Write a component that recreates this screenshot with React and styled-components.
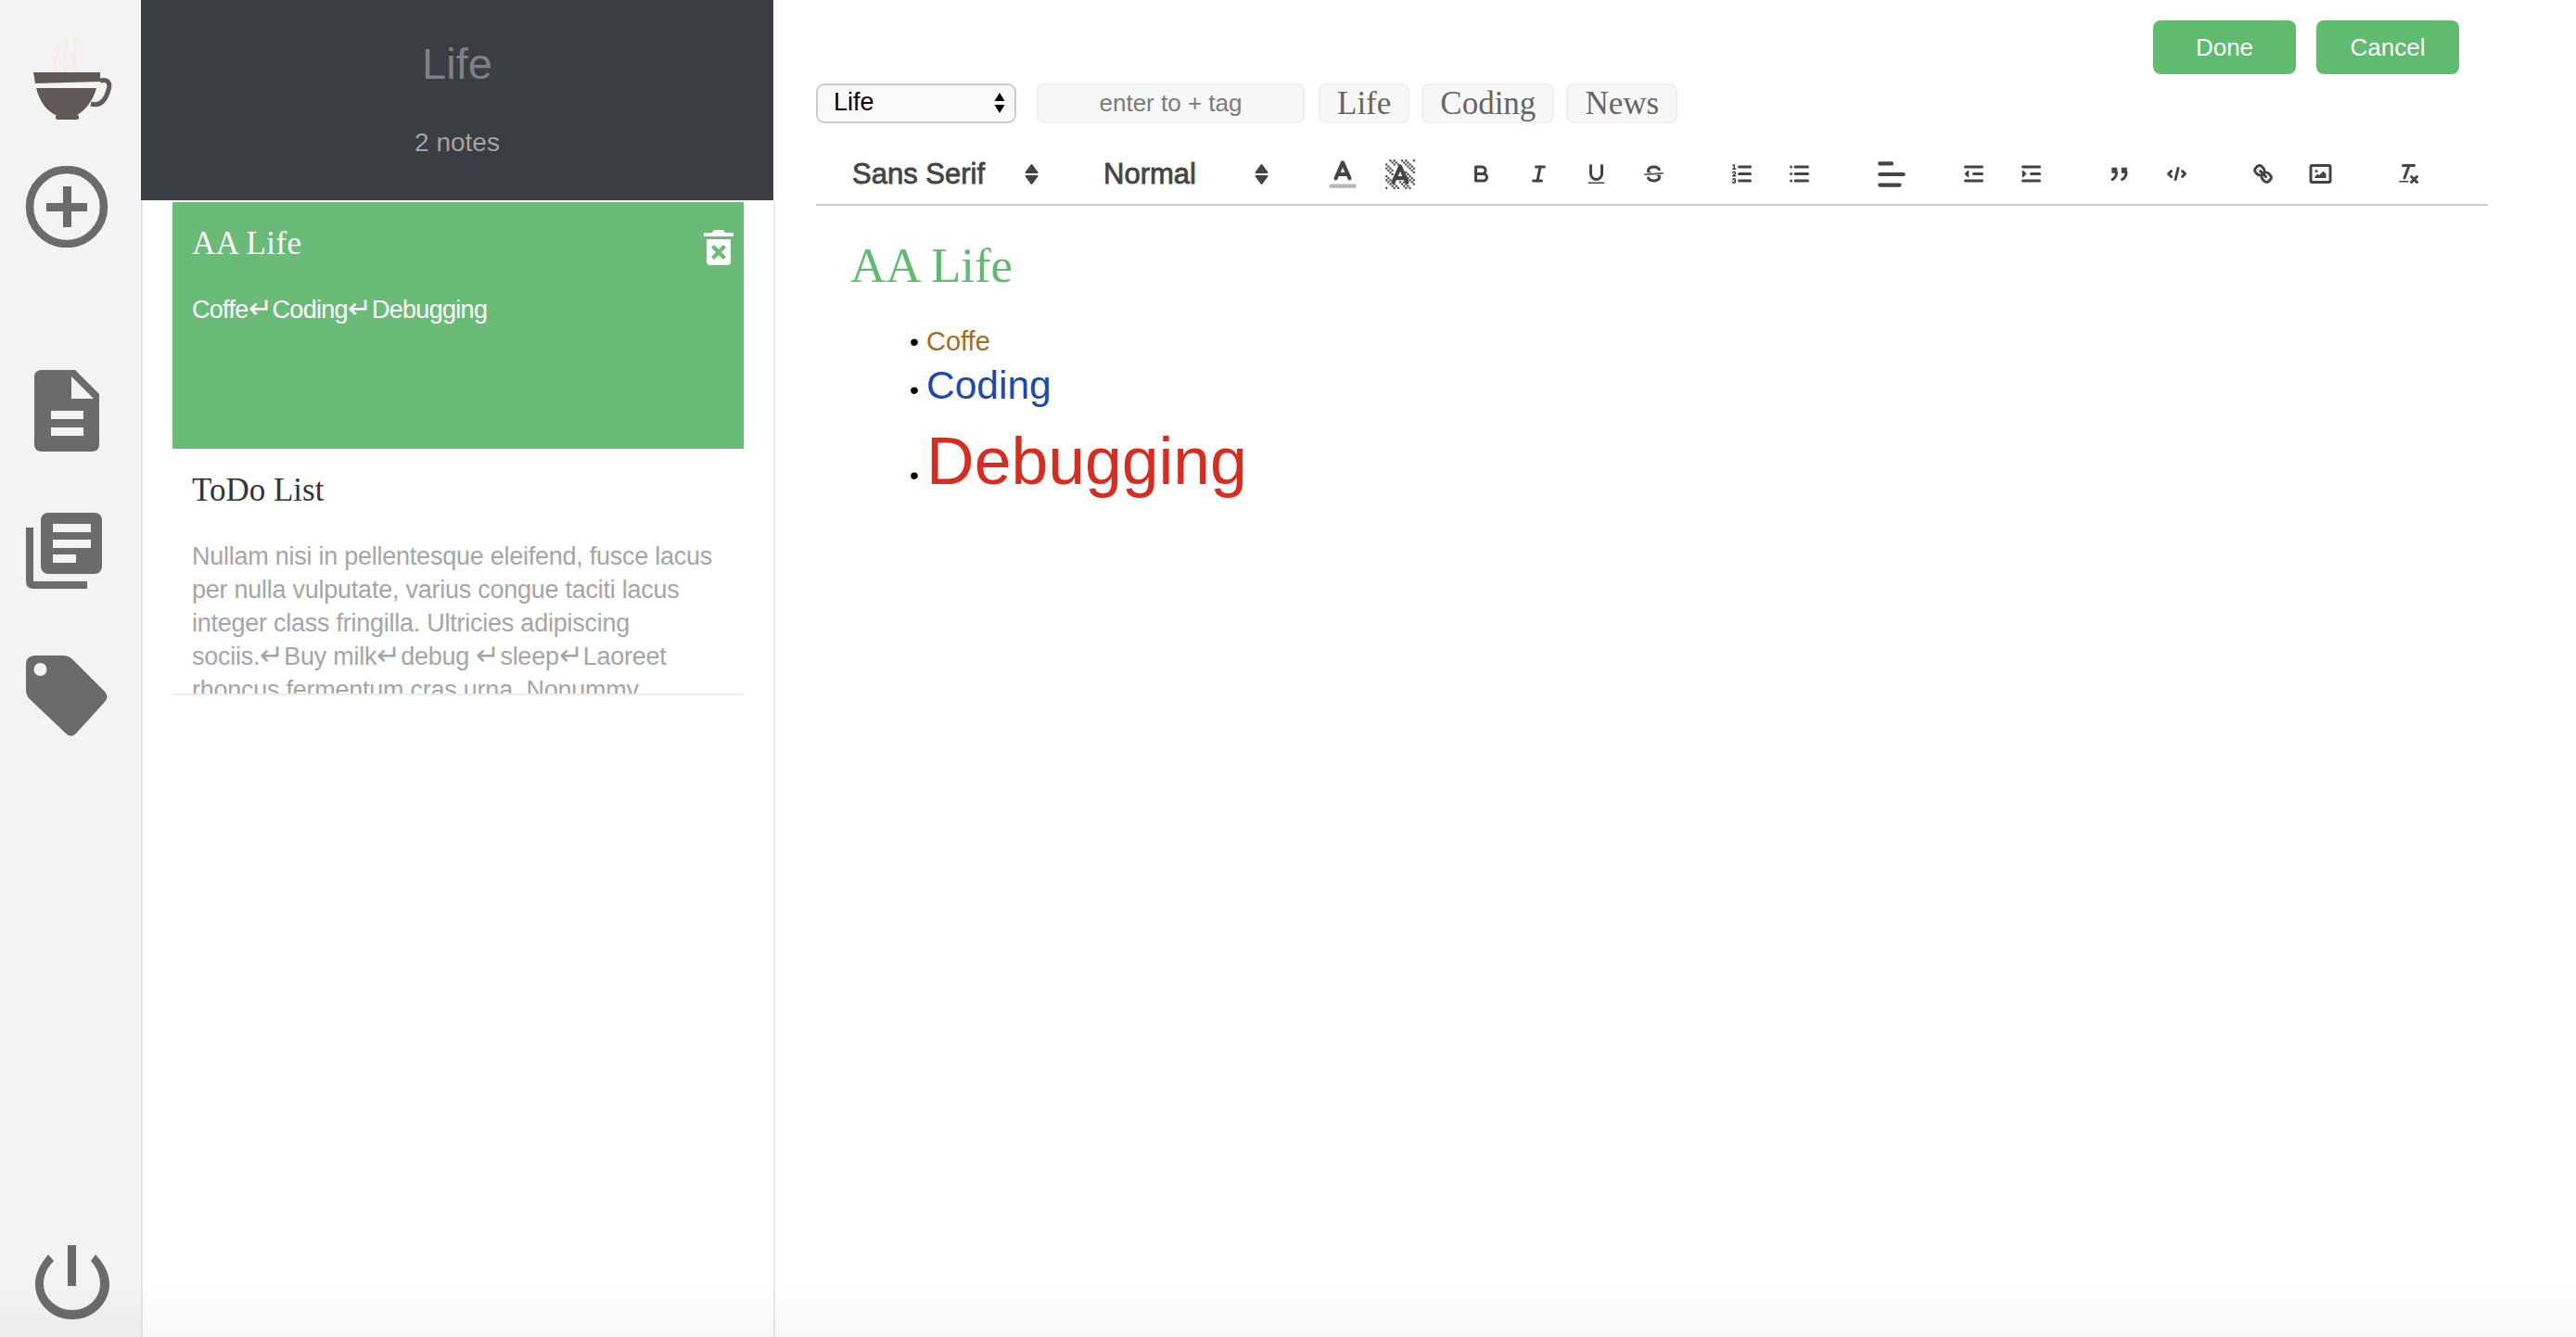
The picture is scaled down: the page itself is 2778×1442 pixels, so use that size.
import React from 'react';
import styled, { createGlobalStyle } from 'styled-components';

const GlobalStyle = createGlobalStyle`
  html, body { margin: 0; height: 100%; background: #fff; overflow: hidden; }
  #root { height: 100%; }
  * { box-sizing: border-box; }
`;

const SANS = `"Liberation Sans", Arial, sans-serif`;
const SERIF = `"Liberation Serif", "Times New Roman", serif`;

const Page = styled.div`
  position: relative;
  display: flex;
  height: 100vh;
  font-family: ${SANS};
`;
const BottomFade = styled.div`
  position: absolute;
  left: 0;
  right: 0;
  bottom: 0;
  height: 60px;
  pointer-events: none;
  background: linear-gradient(rgba(0, 0, 0, 0), rgba(0, 0, 0, 0.03));
`;

/* left icon rail */
const Sidebar = styled.nav`
  flex: 0 0 152px;
  display: flex;
  flex-direction: column;
  background: #f3f3f3;
`;
const NavIcon = styled.svg`
  display: block;
  width: 152px;
  height: ${p => p.$h}px;
  margin-top: ${p => p.$top}px;
  fill: #6b6b6b;
`;
const PowerIcon = styled(NavIcon)`
  margin-top: auto;
  margin-bottom: 19px;
`;

/* notes column */
const NotesPanel = styled.section`
  flex: 0 0 684px;
  display: flex;
  flex-direction: column;
`;
const NotebookHeader = styled.header`
  height: 216px;
  margin-right: 2px;
  background: #3a3d42;
  text-align: center;
`;
const NotebookTitle = styled.h1`
  margin: 0;
  padding-top: 42px;
  font-size: 47px;
  line-height: 54px;
  font-weight: 400;
  color: #808183;
`;
const NotebookCount = styled.div`
  margin-top: 42px;
  font-size: 28px;
  line-height: 32px;
  color: #a3a3a3;
`;
const NoteList = styled.div`
  flex: 1;
  padding: 2px 32px 0 32px;
  border-left: 2px solid #e4e4e4;
  border-right: 2px solid #e9e9e9;
`;
const NoteCard = styled.article`
  position: relative;
  height: 266px;
  padding: 25px 21px 0;
  overflow: hidden;
  background: ${p => (p.$active ? '#6abb77' : '#fff')};
  border-bottom: ${p => (p.$active ? '0' : '2px solid #ececec')};
`;
const NoteTitle = styled.h2`
  margin: 0;
  font-family: ${SERIF};
  font-size: 35px;
  line-height: 40px;
  font-weight: 400;
  letter-spacing: ${p => (p.$active ? '0.4px' : '0')};
  color: ${p => (p.$active ? '#fff' : '#333')};
`;
const NoteBody = styled.p`
  margin: 33px 0 0;
  font-size: 27px;
  line-height: 36px;
  letter-spacing: ${p => (p.$active ? '-0.7px' : '-0.25px')};
  color: ${p => (p.$active ? '#fff' : '#a5a5a5')};
`;
const ReturnMark = styled.span`
  font-size: 31px;
  line-height: 31px;
  letter-spacing: 0;
`;
const TrashIcon = styled.svg`
  position: absolute;
  top: 30px;
  right: 11px;
  width: 32px;
  height: 38px;
`;

/* editor */
const Editor = styled.main`
  flex: 1;
  min-width: 0;
  padding: 22px 95px 0 44px;
`;
const ActionRow = styled.div`
  display: flex;
  justify-content: flex-end;
  gap: 22px;
  padding-right: 31px;
`;
const ActionButton = styled.button`
  width: 154px;
  height: 58px;
  padding: 0;
  border: 0;
  border-radius: 8px;
  background: #5fbb6e;
  color: #fff;
  font-family: ${SANS};
  font-size: 26px;
`;
const MetaRow = styled.div`
  display: flex;
  align-items: stretch;
  height: 43px;
  margin-top: 10px;
`;
const SelectWrap = styled.div`
  position: relative;
  width: 216px;
  margin-right: 22px;
`;
const NotebookSelect = styled.select`
  appearance: none;
  width: 100%;
  height: 100%;
  padding: 0 0 3px 17px;
  border: 2px solid #cbcbcb;
  border-radius: 9px;
  background: #f8f8f8;
  color: #000;
  font-family: ${SANS};
  font-size: 27px;
`;
const SelectArrows = styled.svg`
  position: absolute;
  right: 12px;
  top: 9px;
  width: 12px;
  height: 24px;
  pointer-events: none;
`;
const TagInput = styled.input`
  width: 289px;
  margin-right: 15px;
  border: 2px solid #efefef;
  border-radius: 8px;
  background: #f7f7f7;
  text-align: center;
  font-family: ${SANS};
  font-size: 26px;
  outline: none;
  &::placeholder { color: #7b7b7b; opacity: 1; }
`;
const Tag = styled.span`
  display: flex;
  align-items: center;
  margin-right: 13px;
  padding: 0 18px;
  border: 2px solid #efefef;
  border-radius: 8px;
  background: #f7f7f7;
  font-family: ${SERIF};
  font-size: 35px;
  color: #666;
`;
const Toolbar = styled.div`
  display: flex;
  align-items: center;
  height: 69px;
  margin-top: 20px;
  padding-top: 2px;
  border-bottom: 2px solid #ccc;
`;
const Picker = styled.div`
  flex: 0 0 ${p => p.$width}px;
  display: flex;
  justify-content: space-between;
  align-items: center;
  padding: 0 31px 0 39px;
  font-size: 31px;
  color: #444;
  -webkit-text-stroke: 0.8px #444;
`;
const PickerArrows = styled.svg`
  width: 15px;
  height: 24px;
  fill: #444;
  stroke: #444;
  stroke-width: 2;
  stroke-linejoin: round;
`;
const ToolGroup = styled.div`
  display: flex;
  margin-left: ${p => p.$gap}px;
`;
const ToolButton = styled.button`
  flex: 0 0 62px;
  width: 62px;
  height: 44px;
  padding: 0;
  border: 0;
  background: none;
  display: flex;
  align-items: center;
  justify-content: center;
`;
const ToolSvg = styled.svg.attrs({ viewBox: '0 0 18 18' })`
  width: ${p => p.$size || 27}px;
  height: ${p => p.$size || 27}px;
  fill: none;
  stroke: #444;
  stroke-width: 2;
  stroke-linecap: round;
  stroke-linejoin: round;
  .fill { fill: #444; stroke: none; }
  .thin { stroke-width: 1; }
  .label { stroke: #b5b5b5; }
`;
const Content = styled.div`
  padding: 34px 0 0 37px;
`;
const ContentTitle = styled.h2`
  margin: 0;
  font-family: ${SERIF};
  font-size: 53px;
  line-height: 60px;
  font-weight: 400;
  color: #5fbb6e;
`;
const BulletList = styled.ul`
  list-style: none;
  margin: 33px 0 0;
  padding: 0 0 0 63px;
`;
const Bullet = styled.li`
  display: flex;
  align-items: baseline;
  font-size: ${p => p.$size}px;
  line-height: ${p => p.$line}px;
  color: ${p => p.$color};
  &::before {
    content: '•';
    flex: 0 0 18px;
    margin-left: 1px;
    font-size: 28px;
    line-height: 1;
    color: #000;
  }
`;

const checkerCells = [];
for (let y = 2; y < 17; y++) {
  for (let x = 2; x < 17; x++) {
    const nearLetter = x > 5 && x < 12 && y > 4 && y < 13;
    if ((x + y) % 2 === 0 && (x - y + 18) % 3 !== 0 && !nearLetter) checkerCells.push([x, y]);
  }
}

const Icons = {
  color: () => (
    <ToolSvg $size={38}>
      <line className="label" x1="3" x2="15" y1="15" y2="15" />
      <polyline points="5.5 11 9 3 12.5 11" />
      <line x1="11.63" x2="6.38" y1="9" y2="9" />
    </ToolSvg>
  ),
  background: () => (
    <ToolSvg $size={38}>
      {checkerCells.map(([x, y]) => (
        <rect key={`${x}-${y}`} className="fill" x={x - 0.5} y={y - 0.5} width="1" height="1" />
      ))}
      <polyline points="5.5 13 9 5 12.5 13" />
      <line x1="11.63" x2="6.38" y1="11" y2="11" />
    </ToolSvg>
  ),
  bold: () => (
    <ToolSvg>
      <path d="M5,4H9.5A2.5,2.5,0,0,1,12,6.5v0A2.5,2.5,0,0,1,9.5,9H5A0,0,0,0,1,5,9V4A0,0,0,0,1,5,4Z" />
      <path d="M5,9h5.5A2.5,2.5,0,0,1,13,11.5v0A2.5,2.5,0,0,1,10.5,14H5a0,0,0,0,1,0,0V9A0,0,0,0,1,5,9Z" />
    </ToolSvg>
  ),
  italic: () => (
    <ToolSvg>
      <line x1="7" x2="13" y1="4" y2="4" />
      <line x1="5" x2="11" y1="14" y2="14" />
      <line x1="8" x2="10" y1="14" y2="4" />
    </ToolSvg>
  ),
  underline: () => (
    <ToolSvg>
      <path d="M5,3V9a4.012,4.012,0,0,0,4,4H9a4.012,4.012,0,0,0,4-4V3" />
      <rect className="fill" height="1" rx="0.5" ry="0.5" width="12" x="3" y="15" />
    </ToolSvg>
  ),
  strike: () => (
    <ToolSvg>
      <line className="thin" x1="15.5" x2="2.5" y1="8.5" y2="9.5" />
      <path className="fill" d="M9.007,8C6.542,7.791,6,7.519,6,6.5,6,5.792,7.283,5,9,5c1.571,0,2.765.679,2.969,1.309a1,1,0,0,0,1.9-.617C13.356,4.106,11.354,3,9,3,6.2,3,4,4.538,4,6.5a3.2,3.2,0,0,0,.5,1.843Z" />
      <path className="fill" d="M8.984,10C11.457,10.208,12,10.479,12,11.5c0,0.708-1.283,1.5-3,1.5-1.571,0-2.765-.679-2.969-1.309a1,1,0,1,0-1.9.617C4.644,13.894,6.646,15,9,15c2.8,0,5-1.538,5-3.5a3.2,3.2,0,0,0-.5-1.843Z" />
    </ToolSvg>
  ),
  ordered: () => (
    <ToolSvg>
      <line x1="7" x2="15" y1="4" y2="4" />
      <line x1="7" x2="15" y1="9" y2="9" />
      <line x1="7" x2="15" y1="14" y2="14" />
      <line className="thin" x1="2.5" x2="4.5" y1="5.5" y2="5.5" />
      <path className="fill" d="M3.5,6A0.5,0.5,0,0,1,3,5.5V3.085l-0.276.138A0.5,0.5,0,0,1,2.053,3c-0.124-.247-0.023-0.324.224-0.447l1-.5A0.5,0.5,0,0,1,4,2.5v3A0.5,0.5,0,0,1,3.5,6Z" />
      <path className="thin" d="M4.5,10.5h-2c0-.234,1.85-1.076,1.85-2.234A0.959,0.959,0,0,0,2.5,8.156" />
      <path className="thin" d="M2.5,14.846a0.959,0.959,0,0,0,1.85-.109A0.7,0.7,0,0,0,3.75,14a0.688,0.688,0,0,0,.6-0.736,0.959,0.959,0,0,0-1.85-.109" />
    </ToolSvg>
  ),
  bullet: () => (
    <ToolSvg>
      <line x1="6" x2="15" y1="4" y2="4" />
      <line x1="6" x2="15" y1="9" y2="9" />
      <line x1="6" x2="15" y1="14" y2="14" />
      <line x1="3" x2="3" y1="4" y2="4" />
      <line x1="3" x2="3" y1="9" y2="9" />
      <line x1="3" x2="3" y1="14" y2="14" />
    </ToolSvg>
  ),
  align: () => (
    <ToolSvg $size={38}>
      <line x1="3" x2="9" y1="3.5" y2="3.5" />
      <line x1="3" x2="15" y1="9" y2="9" />
      <line x1="3" x2="13" y1="14.5" y2="14.5" />
    </ToolSvg>
  ),
  outdent: () => (
    <ToolSvg>
      <line x1="3" x2="15" y1="14" y2="14" />
      <line x1="3" x2="15" y1="4" y2="4" />
      <line x1="9" x2="15" y1="9" y2="9" />
      <polyline className="thin" points="5 7 5 11 3 9 5 7" fill="#444" />
    </ToolSvg>
  ),
  indent: () => (
    <ToolSvg>
      <line x1="3" x2="15" y1="14" y2="14" />
      <line x1="3" x2="15" y1="4" y2="4" />
      <line x1="9" x2="15" y1="9" y2="9" />
      <polyline className="thin" points="3 7 3 11 5 9 3 7" fill="#444" />
    </ToolSvg>
  ),
  quote: () => (
    <ToolSvg>
      <rect className="fill" height="4" width="4" x="3.5" y="4.5" />
      <rect className="fill" height="4" width="4" x="10.5" y="4.5" />
      <path d="M7,8c0,4.031-3,5-3,5" />
      <path d="M14,8c0,4.031-3,5-3,5" />
    </ToolSvg>
  ),
  code: () => (
    <ToolSvg>
      <polyline points="5 7 3 9 5 11" />
      <polyline points="13 7 15 9 13 11" />
      <line x1="10" x2="8" y1="5" y2="13" />
    </ToolSvg>
  ),
  link: () => (
    <ToolSvg>
      <line x1="7" x2="11" y1="7" y2="11" />
      <path d="M8.9,4.577a3.476,3.476,0,0,1,.36,4.679A3.476,3.476,0,0,1,4.577,8.9C3.185,7.5,2.035,6.4,4.217,4.217S7.5,3.185,8.9,4.577Z" />
      <path d="M13.423,9.1a3.476,3.476,0,0,0-4.679-.36,3.476,3.476,0,0,0,.36,4.679c1.392,1.392,2.5,2.542,4.679.36S14.815,10.5,13.423,9.1Z" />
    </ToolSvg>
  ),
  image: () => (
    <ToolSvg>
      <rect height="12" width="14" x="2" y="3" rx="1" />
      <circle className="fill" cx="6" cy="7" r="1" />
      <polyline className="fill" points="5 12 5 11 7 9 8 10 11 7 13 9 13 12 5 12" />
    </ToolSvg>
  ),
  clean: () => (
    <ToolSvg>
      <line x1="5" x2="13" y1="3" y2="3" />
      <line x1="6" x2="9.35" y1="12" y2="3" />
      <line x1="11" x2="15" y1="11" y2="15" />
      <line x1="15" x2="11" y1="11" y2="15" />
      <rect className="fill" height="1" rx="0.5" ry="0.5" width="7" x="2" y="14" />
    </ToolSvg>
  ),
};

const toolGroups = [
  { gap: 18, tools: ['color', 'background'] },
  { gap: 25, tools: ['bold', 'italic', 'underline', 'strike'] },
  { gap: 33, tools: ['ordered', 'bullet'] },
  { gap: 38, tools: ['align'] },
  { gap: 26, tools: ['outdent', 'indent'] },
  { gap: 33, tools: ['quote', 'code'] },
  { gap: 31, tools: ['link', 'image'] },
  { gap: 33, tools: ['clean'] },
];

const UpDown = () => (
  <PickerArrows viewBox="0 0 15 24">
    <path d="M7.5 2 L13.5 10 H1.5 Z" />
    <path d="M7.5 22 L13.5 14 H1.5 Z" />
  </PickerArrows>
);

const App = () => {
  return (
    <Page>
      <GlobalStyle />
      <Sidebar>
        <NavIcon viewBox="0 40 152 90" $h={90} $top={40}>
          <g fill="none" stroke="#f5eee2" strokeWidth="3.5" strokeLinecap="round">
            <path d="M60 76 C56 66 64 60 62 51" />
            <path d="M70 76 C66 62 74 56 71 43" />
            <path d="M82 76 C76 62 84 56 81 43" />
          </g>
          <path fill="#5f5a57" d="M36 78 H108 V88 L38 90 Z" />
          <path fill="#5f5a57" d="M39 95 H104 C100 110 90 121 81 125 H62 C50 120 43 110 39 95 Z" />
          <rect fill="#5f5a57" x="60" y="124" width="25" height="5" rx="2" />
          <path fill="none" stroke="#5f5a57" strokeWidth="5" d="M108 87 C118 85 119 91 117 97 C114 108 108 115 98 112" />
        </NavIcon>
        <NavIcon viewBox="0 179 152 88" $h={88} $top={49}>
          <circle cx="72" cy="223" r="40" fill="none" stroke="#6b6b6b" strokeWidth="8.5" />
          <rect x="50" y="219" width="44" height="9" />
          <rect x="68" y="201" width="9" height="44" />
        </NavIcon>
        <NavIcon viewBox="0 399 152 88" $h={88} $top={132}>
          <path d="M45 399 H81 L107 425 V479 Q107 487 99 487 H45 Q37 487 37 479 V407 Q37 399 45 399 Z" />
          <path fill="#f3f3f3" d="M77 406 V430 H101 Z" />
          <rect fill="#f3f3f3" x="55" y="443" width="35" height="9" />
          <rect fill="#f3f3f3" x="55" y="461" width="35" height="9" />
        </NavIcon>
        <NavIcon viewBox="0 553 152 82" $h={82} $top={66}>
          <rect x="44" y="553" width="66" height="66" rx="8" />
          <rect fill="#f3f3f3" x="57" y="565" width="41" height="9" />
          <rect fill="#f3f3f3" x="57" y="582" width="41" height="9" />
          <rect fill="#f3f3f3" x="57" y="598" width="25" height="9" />
          <path d="M28 569 H36 V627 H94 V635 H36 Q28 635 28 627 Z" />
        </NavIcon>
        <NavIcon viewBox="0 707 152 90" $h={90} $top={72}>
          <path fillRule="evenodd" d="M38 707 H68 Q74 707 78 711 L113 746 Q118 752 113 757 L83 790 Q77 797 71 791 L32 754 Q28 750 28 744 V717 Q28 707 38 707 Z M43.5 715 A7 7 0 1 0 43.5 729 A7 7 0 1 0 43.5 715 Z" />
        </NavIcon>
        <PowerIcon viewBox="0 1343 152 80" $h={80} $top={0}>
          <rect x="73" y="1343" width="9" height="44" />
          <path d="M52 1353 C42 1365 38 1375 38 1385 C38 1405 55 1423 78 1423 C101 1423 118 1405 118 1385 C118 1375 114 1365 103 1353 L98 1360 C105 1368 108 1376 108 1385 C108 1400 95 1413 78 1413 C61 1413 47 1400 47 1385 C47 1376 50 1368 58 1360 Z" />
        </PowerIcon>
      </Sidebar>

      <NotesPanel>
        <NotebookHeader>
          <NotebookTitle>Life</NotebookTitle>
          <NotebookCount>2 notes</NotebookCount>
        </NotebookHeader>
        <NoteList>
          <NoteCard $active>
            <NoteTitle $active>AA Life</NoteTitle>
            <NoteBody $active>Coffe<ReturnMark>↵</ReturnMark>Coding<ReturnMark>↵</ReturnMark>Debugging</NoteBody>
            <TrashIcon viewBox="0 0 32 38">
              <path fill="#fff" d="M11 0 H21 L23 3 H32 V7 H0 V3 H9 Z" />
              <path fill="#fff" fillRule="evenodd" d="M3 10 H29 V34 Q29 38 25 38 H7 Q3 38 3 34 Z M11 16 L8 19 L13 24 L8 29 L11 32 L16 27 L21 32 L24 29 L19 24 L24 19 L21 16 L16 21 Z" />
            </TrashIcon>
          </NoteCard>
          <NoteCard>
            <NoteTitle>ToDo List</NoteTitle>
            <NoteBody>
              Nullam nisi in pellentesque eleifend, fusce lacus per nulla vulputate, varius congue taciti lacus integer class fringilla. Ultricies adipiscing sociis.<ReturnMark>↵</ReturnMark>Buy milk<ReturnMark>↵</ReturnMark>debug <ReturnMark>↵</ReturnMark>sleep<ReturnMark>↵</ReturnMark>Laoreet rhoncus fermentum cras urna. Nonummy
            </NoteBody>
          </NoteCard>
        </NoteList>
      </NotesPanel>

      <Editor>
        <ActionRow>
          <ActionButton>Done</ActionButton>
          <ActionButton>Cancel</ActionButton>
        </ActionRow>
        <MetaRow>
          <SelectWrap>
            <NotebookSelect defaultValue="Life">
              <option>Life</option>
              <option>Coding</option>
              <option>News</option>
            </NotebookSelect>
            <SelectArrows viewBox="0 0 12 24">
              <path d="M6 1 L11.5 10 H0.5 Z" />
              <path d="M6 23 L11.5 14 H0.5 Z" />
            </SelectArrows>
          </SelectWrap>
          <TagInput placeholder="enter to + tag" />
          <Tag>Life</Tag>
          <Tag>Coding</Tag>
          <Tag>News</Tag>
        </MetaRow>
        <Toolbar>
          <Picker $width={271}>Sans Serif<UpDown /></Picker>
          <Picker $width={248}>Normal<UpDown /></Picker>
          {toolGroups.map(group => (
            <ToolGroup key={group.tools[0]} $gap={group.gap}>
              {group.tools.map(name => {
                const Icon = Icons[name];
                return <ToolButton key={name}><Icon /></ToolButton>;
              })}
            </ToolGroup>
          ))}
        </Toolbar>
        <Content>
          <ContentTitle>AA Life</ContentTitle>
          <BulletList>
            <Bullet $size={29} $line={38} $color="#a96a1e">Coffe</Bullet>
            <Bullet $size={42.5} $line={58} $color="#1c49ad">Coding</Bullet>
            <Bullet $size={71.5} $line={104} $color="#d62d20">Debugging</Bullet>
          </BulletList>
        </Content>
      </Editor>
      <BottomFade />
    </Page>
  );
};

export default App;
